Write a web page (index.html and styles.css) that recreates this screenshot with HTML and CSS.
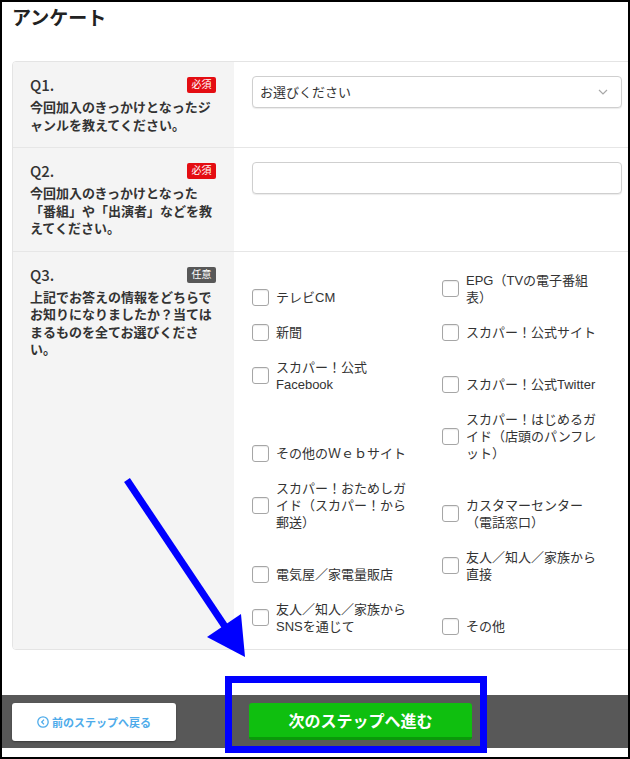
FILE: index.html
```html
<!DOCTYPE html>
<html lang="ja">
<head>
<meta charset="utf-8">
<title>アンケート</title>
<link rel="stylesheet" href="styles.css">
</head>
<body>
<div class="frame">
  <h1 class="title">アンケート</h1>
  <div class="card">
    <div class="qrow">
      <div class="qlabel">
        <div class="qhead"><span class="qnum">Q1.</span><span class="badge req">必須</span></div>
        <p class="qtext">今回加入のきっかけとなったジ<br>ャンルを教えてください。</p>
      </div>
      <div class="qfield">
        <div class="select">
          <span>お選びください</span>
          <svg class="chev" width="10" height="6" viewBox="0 0 10 6"><path d="M1 1 L5 5 L9 1" fill="none" stroke="#a8a8a8" stroke-width="1.2"/></svg>
        </div>
      </div>
    </div>
    <div class="qrow">
      <div class="qlabel">
        <div class="qhead"><span class="qnum">Q2.</span><span class="badge req">必須</span></div>
        <p class="qtext">今回加入のきっかけとなった<br>「番組」や「出演者」などを教<br>えてください。</p>
      </div>
      <div class="qfield">
        <div class="textbox"></div>
      </div>
    </div>
    <div class="qrow last">
      <div class="qlabel">
        <div class="qhead"><span class="qnum">Q3.</span><span class="badge opt">任意</span></div>
        <p class="qtext">上記でお答えの情報をどちらで<br>お知りになりましたか？当ては<br>まるものを全てお選びくださ<br>い。</p>
      </div>
      <div class="qfield checks">
        <div class="check"><span class="box"></span><span class="lbl">テレビCM</span></div>
        <div class="check"><span class="box"></span><span class="lbl">EPG（TVの電子番組<br>表）</span></div>
        <div class="check"><span class="box"></span><span class="lbl">新聞</span></div>
        <div class="check"><span class="box"></span><span class="lbl">スカパー！公式サイト</span></div>
        <div class="check"><span class="box"></span><span class="lbl">スカパー！公式<br>Facebook</span></div>
        <div class="check"><span class="box"></span><span class="lbl">スカパー！公式Twitter</span></div>
        <div class="check"><span class="box"></span><span class="lbl">その他のＷｅｂサイト</span></div>
        <div class="check"><span class="box"></span><span class="lbl">スカパー！はじめるガ<br>イド（店頭のパンフレ<br>ット）</span></div>
        <div class="check"><span class="box"></span><span class="lbl">スカパー！おためしガ<br>イド（スカパー！から<br>郵送）</span></div>
        <div class="check"><span class="box"></span><span class="lbl">カスタマーセンター<br>（電話窓口）</span></div>
        <div class="check"><span class="box"></span><span class="lbl">電気屋／家電量販店</span></div>
        <div class="check"><span class="box"></span><span class="lbl">友人／知人／家族から<br>直接</span></div>
        <div class="check"><span class="box"></span><span class="lbl">友人／知人／家族から<br>SNSを通じて</span></div>
        <div class="check"><span class="box"></span><span class="lbl">その他</span></div>
      </div>
    </div>
  </div>
  <div class="bar">
    <button class="back">
      <svg width="12" height="12" viewBox="0 0 12 12"><circle cx="6" cy="6" r="5.2" fill="none" stroke="#4eabea" stroke-width="1.3"/><path d="M7 3.6 L4.7 6 L7 8.4" fill="none" stroke="#4eabea" stroke-width="1.3"/></svg>
      <span>前のステップへ戻る</span>
    </button>
    <button class="next">次のステップへ進む</button>
  </div>
  <div class="highlight"></div>
  <svg class="arrow" width="630" height="759" viewBox="0 0 630 759">
    <line x1="127" y1="480" x2="228" y2="631" stroke="#0000ff" stroke-width="7"/>
    <polygon points="245,657 207,637 241,614" fill="#0000ff"/>
  </svg>
</div>
</body>
</html>
```
FILE: styles.css
```css
* { box-sizing: border-box; }
body {
  margin: 0;
  font-family: "Liberation Sans", "Noto Sans CJK JP", sans-serif;
  color: #333;
  background: #fff;
}
.frame {
  position: relative;
  width: 630px;
  height: 759px;
  border: 2px solid #000;
  overflow: hidden;
  background: #fff;
}
.title {
  margin: 0;
  height: 59px;
  padding: 6px 0 0 10px;
  font-size: 19px;
  line-height: 22px;
  font-weight: bold;
  color: #222;
}
.card {
  margin-left: 10px;
  width: 640px;
  border: 1px solid #e4e4e4;
  border-radius: 4px;
  overflow: hidden;
}
.qrow {
  display: flex;
  border-bottom: 1px solid #e6e6e6;
}
.qrow.last { border-bottom: none; }
.qlabel {
  width: 221px;
  flex: none;
  background: #f4f4f4;
  padding: 13px 18px 13px 17px;
}
.qhead {
  display: flex;
  justify-content: space-between;
  align-items: center;
  height: 20px;
  margin-bottom: 4px;
}
.qnum {
  font-family: "Noto Sans CJK JP", sans-serif;
  font-weight: 500;
  font-size: 15px;
  line-height: 20px;
  color: #333;
}
.badge {
  display: inline-block;
  width: 29px;
  height: 16px;
  border-radius: 2px;
  color: #fff;
  font-size: 10px;
  line-height: 16px;
  text-align: center;
}
.badge.req { background: #e40d12; }
.badge.opt { background: #585858; }
.qtext {
  margin: 0;
  font-size: 13px;
  line-height: 17.5px;
  font-weight: bold;
  white-space: nowrap;
  color: #333;
}
.qfield {
  flex: 1;
  padding: 14px 18px;
}
.select, .textbox {
  width: 370px;
  height: 32px;
  border: 1px solid #cfcfcf;
  border-radius: 4px;
  background: #fff;
  box-shadow: 0 1px 1px rgba(0,0,0,0.08);
}
.select {
  display: flex;
  align-items: center;
  justify-content: space-between;
  padding: 0 13px 1px 7px;
  font-size: 13px;
  color: #333;
}
.checks {
  display: grid;
  grid-template-columns: 190px 190px;
  row-gap: 18px;
  align-items: end;
  align-content: start;
  padding: 20px 18px 14px;
}
.check {
  display: flex;
  align-items: center;
  gap: 7px;
}
.box {
  flex: none;
  width: 17px;
  height: 17px;
  border: 1px solid #a6a6a6;
  border-radius: 3px;
  background: #fff;
  box-shadow: inset 0 1px 1px rgba(0,0,0,0.08);
}
.lbl {
  font-size: 13px;
  line-height: 17px;
  white-space: nowrap;
  color: #333;
}
.bar {
  margin-top: 45px;
  height: 53px;
  background: #585858;
  display: flex;
  align-items: flex-start;
  gap: 73px;
  padding: 8px 0 0 10px;
}
.back {
  width: 164px;
  height: 38px;
  border: none;
  border-radius: 3px;
  background: #fff;
  box-shadow: 0 1px 2px rgba(0,0,0,0.35);
  display: flex;
  align-items: center;
  justify-content: center;
  gap: 3px;
  font-family: inherit;
  font-size: 11px;
  font-weight: bold;
  color: #4eabea;
  padding: 0;
}
.next {
  width: 223px;
  height: 37px;
  border: none;
  border-bottom: 3px solid #0a9a0a;
  border-radius: 3px;
  background: #0fbf0f;
  color: #fff;
  font-family: inherit;
  font-size: 16px;
  font-weight: bold;
  padding: 0;
}
.highlight {
  position: absolute;
  left: 223px;
  top: 674px;
  width: 262px;
  height: 77px;
  border: 7px solid #0000ff;
  pointer-events: none;
}
.arrow {
  position: absolute;
  left: -2px;
  top: -2px;
  pointer-events: none;
}
```
